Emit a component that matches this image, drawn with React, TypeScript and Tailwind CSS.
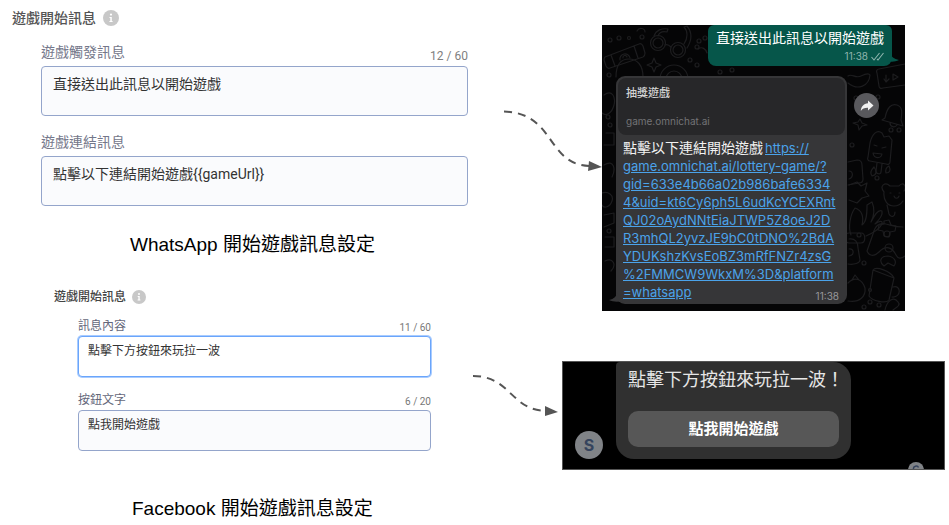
import React from "react";

const CJK = "font-['Roboto','Noto_Sans_CJK_TC',sans-serif]";
const CHAT = "font-['Inter','Noto_Sans_CJK_TC',sans-serif]";
const CAPTION = "font-['Liberation_Sans','Noto_Sans_CJK_TC',sans-serif]";

function InfoIcon({ className }: { className: string }) {
  return (
    <svg viewBox="0 0 16 16" className={className} aria-hidden="true">
      <circle cx="8" cy="8" r="8" fill="#c8c8c8" />
      <circle cx="8" cy="4.6" r="1.1" fill="#fff" />
      <path d="M6.5 6.9h2.3v4h.8v1.1H6.400v-1.100h.9V8h-.8z" fill="#fff" />
    </svg>
  );
}

type FieldProps = {
  id: string;
  label: string;
  count?: string;
  value: string;
  size: "md" | "sm";
  focused?: boolean;
};

function Field({ id, label, count, value, size, focused }: FieldProps) {
  const md = size === "md";
  return (
    <div>
      <div className={md ? "flex h-6 items-end justify-between" : "flex h-5 items-end justify-between"}>
        <label htmlFor={id} className={md ? "text-sm leading-6 text-[#74778a]" : "text-xs leading-5 text-[#64677a]"}>
          {label}
        </label>
        {count && (
          <span className={md ? "text-xs leading-4 text-[#808080]" : "text-[10px] leading-4 text-[#777]"}>{count}</span>
        )}
      </div>
      <textarea
        id={id}
        defaultValue={value}
        className={
          "block w-full resize-none overflow-hidden rounded border outline-none text-[#333] " +
          (md ? "mt-[2px] h-[50px] px-[11px] py-2 text-sm leading-[18px] " : "h-[41px] px-[9px] py-1 text-xs leading-5 ") +
          (focused ? "border-[#6aa5fb] bg-white ring-1 ring-[#a9ccff]" : "border-[#94a5cb] bg-[#fafbfd]")
        }
      />
    </div>
  );
}

function Doodles() {
  return (
    <svg
      viewBox="0 0 303 286"
      preserveAspectRatio="xMidYMid slice"
      className="absolute inset-0 h-full w-full"
      fill="none"
      stroke="#1d1d1f"
      strokeWidth="1.2"
      strokeLinecap="round"
      strokeLinejoin="round"
      aria-hidden="true"
    >
      <circle cx="56" cy="18" r="7.500" />
      <circle cx="56" cy="18" r="5" />
      <circle cx="76" cy="25" r="7.500" />
      <circle cx="76" cy="25" r="5" />
      <path d="M63 20c2-1 4 0 6 2M52 11c2-6 8-8 14-7l-1 3c-5-1-8 1-9 4M82 19c4-6 4-13 0-17l3-1c5 6 5 14 0 22" />
      <path d="M3 32l34-13c2-1 3 0 4 2l2 7c0 2 0 3-2 4L8 43c-2 1-3 0-4-2l-2-6c0-1 0-2 1-3zM9 30l4 11M32 21l4 12M18 35a5 5 0 0 1 10-2M21 33a2 2 0 0 1 4-1" />
      <path d="M14 52c0-12 5-18 13-18s14 6 14 18M52 33l2 5 5 2-5 2-2 5-2-5-5-2 5-2z" />
      <path d="M58 54a14 14 0 0 1 28 0M64 54a8 8 0 0 1 16 0M96 24c4-3 8 0 9 4M35 6c2-4 8-3 8 1" />
      <circle cx="97" cy="16" r="2" />
      <circle cx="95" cy="22" r="2" />
      <circle cx="103" cy="13" r="2" />
      <circle cx="88" cy="35" r="2" />
      <circle cx="95" cy="40" r="2" />
      <circle cx="118" cy="47" r="2" />
      <circle cx="130" cy="45" r="2" />
      <circle cx="40" cy="12" r="2" />
      <circle cx="27" cy="13" r="1.500" />
      <circle cx="8" cy="15" r="2" />
      <circle cx="17" cy="13" r="2" />
      <circle cx="7" cy="50" r="2" />
      <path d="M2 70c8-6 12 2 10 10s-8 12-12 8M4 108h8v12H2M2 140c10-6 12 4 8 12M0 168c6-2 12 2 10 8s-8 8-10 4M2 190l10-2v10l-10 4M3 212h9v10H3M3 236c8-4 12 4 6 10" />
      <circle cx="6" cy="92" r="2" />
      <circle cx="8" cy="100" r="2" />
      <circle cx="7" cy="206" r="2" />
      <path d="M246 51c4-3 7 3 13 0s8-3 9-1c-1 11-12 16-22 8M277 44l26-5M277 44c-2 0-3 2-2 4l2 13c0 2 2 3 4 2l22-3M284 50v6m-2-2 2 3 3-3M291 49l5 3-5 3z" />
      <path d="M283 93c2-10 6-15 12-13s5 8 4 15l2 6-21-6zM288 98c0 4 5 5 7 2M258 94l2 4 5 2-5 1-3 4-1-5-5-2 5-1z" />
      <path d="M268 118c2-9 7-14 12-10l2 4 5-1 3 4-2 22c0 2-2 3-4 2l-16-3c-2 0-3-2-2-4zM275 138l-1 8c0 3 5 4 5 1l1-8M272 120l3 1m5 2 4-1M271 128c1 6 8 6 9 1z" />
      <path d="M246 137l9-2c4 0 5 2 5 5l1 14c0 3-1 4-4 4l-11 2M247 146c4 0 5 6 0 8M270 151c-3-4 0-7 2-9 3 4 3 8-2 9zM284 148c-1-4 1-6 3-7 2 4 1 7-3 7z" />
      <circle cx="254" cy="73" r="2" />
      <circle cx="276" cy="72" r="2" />
      <circle cx="289" cy="105" r="2" />
      <circle cx="297" cy="105" r="2" />
      <circle cx="250" cy="120" r="2" />
      <circle cx="275" cy="153" r="2" />
      <path d="M247 160l8-3 4 4 6-3-2 8 4 5-7 2-5 5-8-3" />
      <path d="M282 167c-5-6 1-11 6-6h9c4-5 8 0 5 5M282 167c-1 9 4 14 10 14 4 0 7-2 9-5M288 168h1m8 0h1m-6 3c1 3 4 3 5 0M285 180l2 9c2 4 6 3 6-2" />
      <path d="M249 210c-3-8-1-20 4-27 7 2 9 9 7 17 5-3 5-13 5-20l5-3c3 7 2 14-1 20 3-6 7-13 11-11 1 4-3 9-7 13 4-3 8-4 7 0-3 6-9 9-16 12M247 208h12c5 0 5 10 0 10h-12c-5 0-5-10 0-10z" />
      <path d="M265 226l6-17c2-8 6-12 13-10 5 1 9 3 17 3M265 226c2 5 7 6 12 1 7-7 13-5 17 3 2 4 5 4 9 1" />
      <path d="M282 196l5-1 2 5 5 1-1 5-5 1-1 5-5-1-1-5-5-1 1-5 5-1z" />
      <circle cx="287" cy="223" r="4" />
      <circle cx="285" cy="209" r="3" />
      <path d="M247 214c6-1 9 3 9 9l2 12c0 3-6 5-12 4M247 224c5-1 6 6 0 7M271 245l21 8-5 22c-3 4-17 1-20-4zM271 245c3-4 18 1 21 8M291 262c8-3 9 11-1 10M282 241c-6-5-3-10 4-10 7 1 9 6 6 10l-6-3z" />
      <path d="M246 258c7-7 14-4 17 5 1 8-5 15-17 13M250 255l3-5 4 5M283 285c2-10 9-14 13-8 3 3-1 5-5 8" />
      <circle cx="257" cy="210" r="2" />
      <circle cx="262" cy="238" r="2" />
      <circle cx="268" cy="265" r="1.500" />
      <circle cx="268" cy="277" r="2" />
      <circle cx="277" cy="280" r="2" />
      <circle cx="262" cy="282" r="2" />
    </svg>
  );
}

const LINK_LINES = [
  "https://",
  "game.omnichat.ai/lottery-game/?",
  "gid=633e4b66a02b986bafe6334",
  "4&uid=kt6Cy6ph5L6udKcYCEXRnt",
  "QJ02oAydNNtEiaJTWP5Z8oeJ2D",
  "R3mhQL2yvzJE9bC0tDNO%2BdA",
  "YDUKshzKvsEoBZ3mRfFNZr4zsG",
  "%2FMMCW9WkxM%3D&platform",
  "=whatsapp",
];

function WhatsAppChat() {
  return (
    <div className={`relative min-w-0 flex-1 overflow-hidden bg-[#050506] pb-[7px] ${CHAT}`}>
      <Doodles />
      <div className="relative flex justify-end pr-[13px]">
        <div className="relative h-[41px] rounded-lg rounded-t-md bg-[#06564a] px-2 pt-[3px] text-white">
          <p className="text-sm leading-5">直接送出此訊息以開始遊戲</p>
          <div className="flex items-center justify-end gap-[3px] text-[10px] leading-4 text-[#8fb5ae]">
            <span>11:38</span>
            <svg viewBox="0 0 13 9" className="h-[9px] w-[13px]" fill="none" stroke="currentColor" strokeWidth="1.1" aria-hidden="true">
              <path d="M.5 5l2.500 3L8.500 1M6 7l1 1 5.500-7" />
            </svg>
          </div>
          <svg viewBox="0 0 12 12" className="absolute -right-[7px] bottom-[2px] size-3" aria-hidden="true">
            <path d="M3 0c1 5 4 7 9 8-4 2-8 2-12 1z" fill="#06564a" />
          </svg>
        </div>
      </div>
      <div className="relative mt-[10px] flex items-start gap-[7px] pl-[14px]">
        <div className="relative w-[231px] rounded-[9px] bg-[#363638] p-[2px]">
          <div className="flex h-[57px] flex-col justify-between rounded-lg bg-[#272729] px-2 pt-[7px] pb-[8px]">
            <p className="text-[11px] leading-4 font-medium text-[#d4d4d4]">抽獎遊戲</p>
            <p className="text-[10px] leading-3 text-[#737376]">game.omnichat.ai</p>
          </div>
          <p className="mt-1 mb-px pl-[5px] text-sm leading-[18px] whitespace-nowrap text-[#f2f2f2]">
            點擊以下連結開始遊戲
            <a href="#game" className="ml-[2px] text-[13px] text-[#4ba3ea] underline">
              {LINK_LINES.map((line, i) => (
                <React.Fragment key={line}>
                  {i > 0 && <br />}
                  {line}
                </React.Fragment>
              ))}
            </a>
          </p>
          <span className="absolute right-2 bottom-0 text-[10px] leading-4 text-[#98989b]">11:38</span>
          <svg viewBox="0 0 14 12" className="absolute bottom-0 -left-[7px] h-3 w-[14px]" aria-hidden="true">
            <path d="M8 0c0 4-3 7-8 8 4 2 9 2 14 1z" fill="#363638" />
          </svg>
        </div>
        <button type="button" aria-label="轉寄" className="mt-[17px] flex size-[25px] items-center justify-center rounded-full bg-[#59595d]">
          <svg viewBox="0 0 14 12" className="h-3 w-[14px]" fill="#f2f2f2" aria-hidden="true">
            <path d="M8 .5 13.5 5.500 8 10.500V7.700C4.500 7.600 2.300 8.700.8 11 1 7 3.500 3.700 8 3.300z" />
          </svg>
        </button>
      </div>
    </div>
  );
}

function MessengerChat() {
  return (
    <div className={`relative flex h-[109px] min-w-0 flex-1 items-start gap-[13px] overflow-hidden border border-[#555] bg-black pl-3 ${CHAT}`}>
      <div className="mt-[69px] flex size-7 shrink-0 items-center justify-center rounded-full bg-[#808387] text-base font-bold text-[#35435d]">
        S
      </div>
      <div className="w-[235px] rounded-[18px] rounded-tl bg-[#303030] px-3 pt-[6px] pb-3">
        <p className="text-lg leading-6 whitespace-nowrap text-[#e6e6e6]">點擊下方按鈕來玩拉一波！</p>
        <button type="button" className="mt-[19px] block h-9 w-full rounded-[10px] bg-[#575757] text-[15px] font-bold text-white">
          點我開始遊戲
        </button>
      </div>
      <svg viewBox="0 0 16 7" className="absolute right-5 bottom-0 h-[7px] w-4" aria-hidden="true">
        <circle cx="8" cy="8" r="8" fill="#808387" />
        <path d="M5.500 7c-.5-3 4-4 5-1.500" fill="none" stroke="#35435d" strokeWidth="1.500" />
      </svg>
    </div>
  );
}

export default function App() {
  return (
    <main className="grid min-h-screen grid-cols-[minmax(0,468fr)_minmax(0,481fr)] bg-white">
      <div className={CJK}>
        <section className="pt-2 pl-3">
          <h2 className="flex items-center gap-[7px] text-sm leading-5 font-medium text-[#555]">
            遊戲開始訊息
            <InfoIcon className="size-4" />
          </h2>
          <div className="mt-3 flex flex-col gap-[14px] pl-[29px]">
            <Field id="wa-trigger" size="md" label="遊戲觸發訊息" count="12 / 60" value="直接送出此訊息以開始遊戲" />
            <Field id="wa-link" size="md" label="遊戲連結訊息" value="點擊以下連結開始遊戲{{gameUrl}}" />
          </div>
        </section>
        <p className={`mt-[27px] pl-[130px] text-[19px] leading-6 text-black ${CAPTION}`}>WhatsApp 開始遊戲訊息設定</p>
        <section className="mt-[30px] pr-[37px] pl-[54px]">
          <h2 className="flex items-center gap-[6px] text-xs leading-5 font-medium text-[#444]">
            遊戲開始訊息
            <InfoIcon className="size-[14px]" />
          </h2>
          <div className="mt-[9px] flex flex-col gap-[13px] pl-6">
            <Field id="fb-content" size="sm" label="訊息內容" count="11 / 60" value="點擊下方按鈕來玩拉一波" focused />
            <Field id="fb-button" size="sm" label="按鈕文字" count="6 / 20" value="點我開始遊戲" />
          </div>
        </section>
        <p className={`mt-[46px] pl-[132px] text-[19px] leading-6 text-black ${CAPTION}`}>Facebook 開始遊戲訊息設定</p>
      </div>
      <div className="flex flex-col gap-[50px] pt-[25px]">
        <div className="flex items-start pr-11 pl-9">
          <svg viewBox="0 0 98 70" className="mt-[80px] h-[70px] w-[98px] shrink-0" aria-hidden="true">
            <path d="M0 6.500C52 8 42 60 86 61" fill="none" stroke="#555" strokeWidth="2" strokeDasharray="8 6" />
            <path d="M85 56l13 6-14 4z" fill="#555" />
          </svg>
          <WhatsAppChat />
        </div>
        <div className="flex items-start pr-1 pl-[5px]">
          <svg viewBox="0 0 89 60" className="h-[60px] w-[89px] shrink-0" aria-hidden="true">
            <path d="M0 15C38 15 38 50 74 50" fill="none" stroke="#555" strokeWidth="2" strokeDasharray="8 6" />
            <path d="M72 45l13 6-13 4z" fill="#555" />
          </svg>
          <MessengerChat />
        </div>
      </div>
    </main>
  );
}
